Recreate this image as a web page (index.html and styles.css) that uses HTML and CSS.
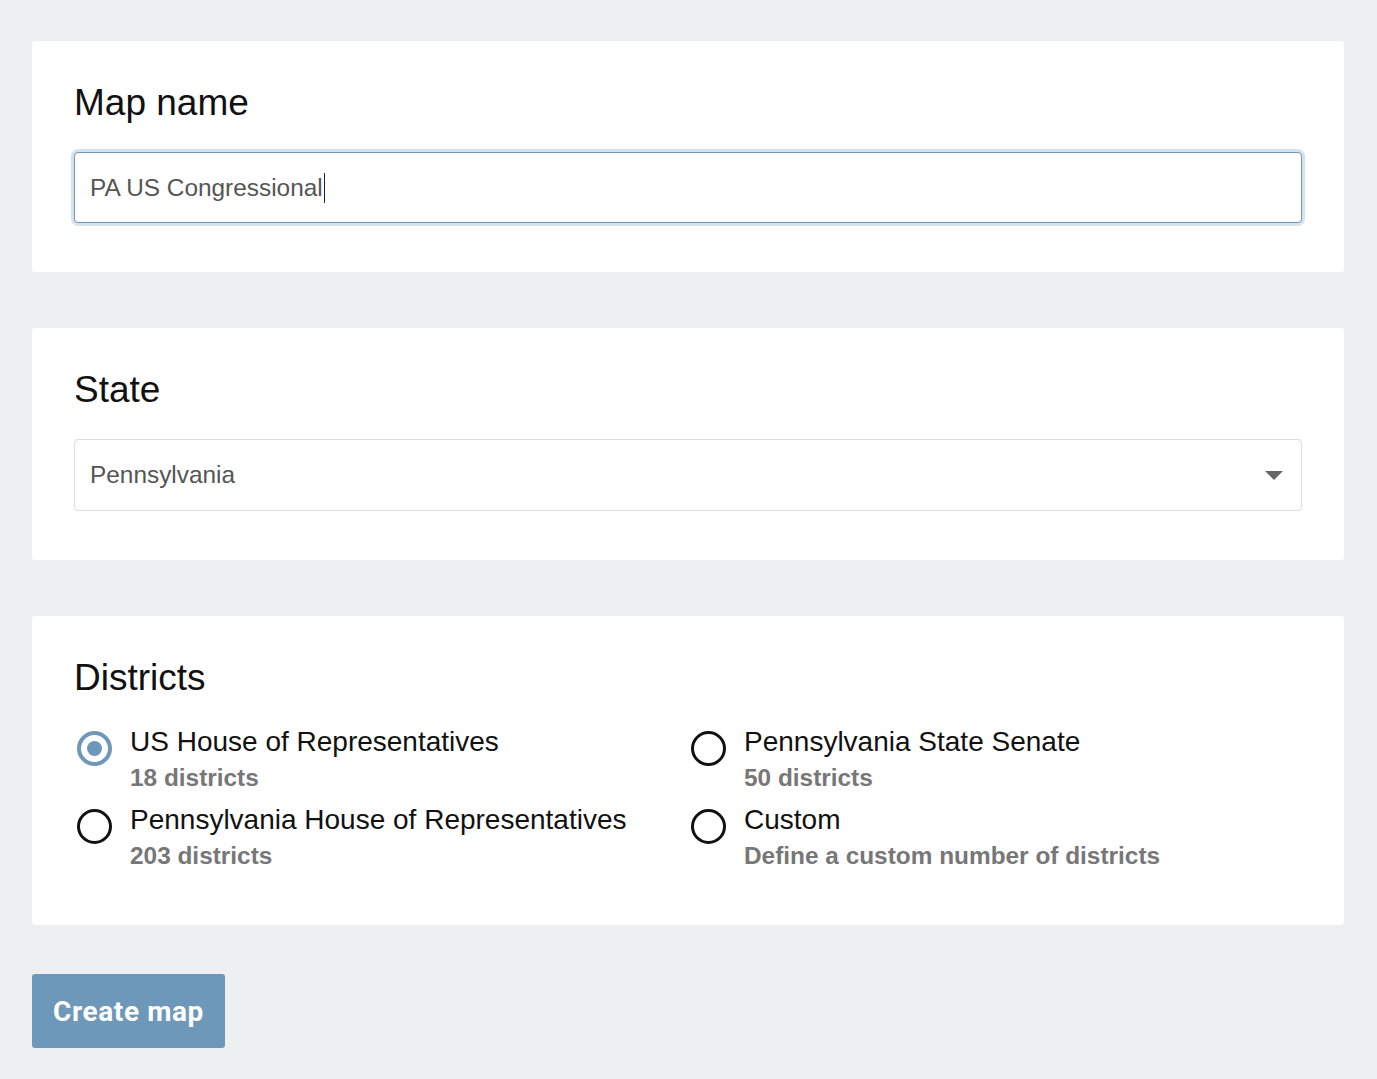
FILE: index.html
```html
<!DOCTYPE html>
<html lang="en">
<head>
<meta charset="utf-8">
<title>Create map</title>
<link rel="stylesheet" href="styles.css">
</head>
<body>
<main class="page">
  <section class="card">
    <h2 class="card-title">Map name</h2>
    <div class="text-input is-focused">
      <span class="input-value">PA US Congressional</span><span class="caret"></span>
    </div>
  </section>

  <section class="card">
    <h2 class="card-title">State</h2>
    <div class="select">
      <span class="select-value">Pennsylvania</span>
      <svg class="select-arrow" width="18" height="9" viewBox="0 0 18 9"><path d="M0 0 H18 L9 9 Z" fill="#666"/></svg>
    </div>
  </section>

  <section class="card card-districts">
    <h2 class="card-title">Districts</h2>
    <div class="radio-grid">
      <div class="radio-option">
        <span class="radio radio-checked"><span class="radio-dot"></span></span>
        <div class="radio-text">
          <div class="radio-label">US House of Representatives</div>
          <div class="radio-sub">18 districts</div>
        </div>
      </div>
      <div class="radio-option">
        <span class="radio"></span>
        <div class="radio-text">
          <div class="radio-label">Pennsylvania State Senate</div>
          <div class="radio-sub">50 districts</div>
        </div>
      </div>
      <div class="radio-option">
        <span class="radio"></span>
        <div class="radio-text">
          <div class="radio-label">Pennsylvania House of Representatives</div>
          <div class="radio-sub">203 districts</div>
        </div>
      </div>
      <div class="radio-option">
        <span class="radio"></span>
        <div class="radio-text">
          <div class="radio-label">Custom</div>
          <div class="radio-sub">Define a custom number of districts</div>
        </div>
      </div>
    </div>
  </section>

  <div class="actions">
    <button class="btn-primary" type="button">Create map</button>
  </div>
</main>
</body>
</html>
```

FILE: styles.css
```css
* { box-sizing: border-box; }

html, body {
  margin: 0;
  padding: 0;
  background: #eeeff1;
  font-family: "Liberation Sans", Arial, sans-serif;
  color: #111;
}

.page {
  padding: 41px 33px 40px 32px;
  display: flex;
  flex-direction: column;
  gap: 56px;
}

.card {
  background: #fff;
  border-radius: 3px;
  padding: 41px 42px 49px 42px;
}

.card-districts {
  padding-bottom: 55px;
}

.card-title {
  margin: 0 0 28px 0;
  font-size: 37px;
  font-weight: 400;
  line-height: 42px;
  color: #111;
}

.text-input {
  height: 71px;
  border: 1px solid #6d98ba;
  border-radius: 4px;
  padding: 0 15px;
  display: flex;
  align-items: center;
  font-size: 24.4px;
  color: #555;
  background: #fff;
}

.text-input.is-focused {
  box-shadow: 0 0 0 3px #d5e2ee;
}

.caret {
  display: inline-block;
  width: 1px;
  height: 30px;
  background: #222;
  margin-left: 1px;
}

.select {
  height: 72px;
  border: 1px solid #dcdcdc;
  border-radius: 4px;
  padding: 0 18px 0 15px;
  display: flex;
  align-items: center;
  justify-content: space-between;
  font-size: 24.4px;
  color: #555;
}

.select-arrow {
  display: block;
  margin-top: 1px;
}

.radio-grid {
  display: grid;
  grid-template-columns: 1fr 1fr;
  row-gap: 13px;
}

.radio-option {
  display: flex;
  align-items: flex-start;
}

.radio {
  flex: none;
  width: 35px;
  height: 35px;
  margin: 4px 18px 0 3px;
  border: 3px solid #111;
  border-radius: 50%;
  display: flex;
  align-items: center;
  justify-content: center;
}

.radio-checked {
  border: 4px solid #6d98ba;
}

.radio-dot {
  width: 15px;
  height: 15px;
  border-radius: 50%;
  background: #6d98ba;
}

.radio-label {
  font-size: 28px;
  line-height: 30px;
  color: #111;
}

.radio-sub {
  margin-top: 7px;
  font-size: 24.4px;
  line-height: 28px;
  font-weight: 700;
  color: #777;
}

.actions {
  display: flex;
  margin-top: -7px;
}

.btn-primary {
  height: 74px;
  padding: 0 21px;
  border: none;
  border-radius: 3px;
  background: #6d98ba;
  color: #fff;
  font-family: Roboto, "Liberation Sans", sans-serif;
  font-weight: 700;
  font-size: 28px;
  letter-spacing: 0.6px;
  cursor: pointer;
}
```
